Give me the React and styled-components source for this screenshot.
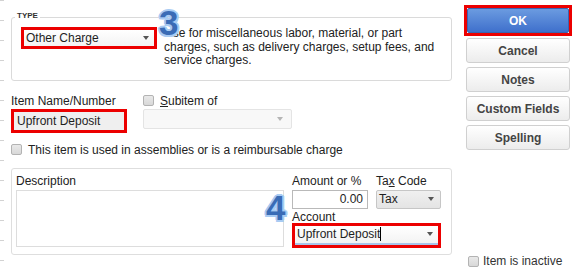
import React from "react";
import styled, { createGlobalStyle } from "styled-components";

const Global = createGlobalStyle`
  html, body { margin: 0; padding: 0; background: #fff; }
  body { font-family: "Liberation Sans", Arial, sans-serif; }
`;

const RED = "#ec0000";

const Page = styled.div`
  position: relative;
  width: 576px;
  height: 268px;
  box-sizing: border-box;
  padding: 5px 4px 0 11px;
  display: flex;
  gap: 12px;
  overflow: hidden;
  font-size: 12px;
  color: #1e1e1e;
  background:
    linear-gradient(#fff 19px, #d2d2d2 19px) 0 1px / 4px 20px repeat-y,
    #fff;
`;

const Main = styled.div`
  width: 441px;
  margin-top: 6px;
  display: flex;
  flex-direction: column;
`;

const TypeBox = styled.fieldset`
  margin: 0;
  min-width: 0;
  padding: 3px 9px 12px 9px;
  border: 1px solid #dadada;
  border-radius: 3px;
`;

const Legend = styled.legend`
  margin-left: -6px;
  padding: 0 2px 4px;
  font-size: 8px;
  line-height: 9px;
  font-weight: bold;
  color: #333;
`;

const TypeRow = styled.div`
  position: relative;
  display: flex;
  align-items: flex-start;
  gap: 7px;
`;

const Highlight = styled.div`
  box-sizing: border-box;
  width: ${(p) => p.$w}px;
  height: ${(p) => p.$h}px;
  border: 3px solid ${RED};
  display: flex;
`;

const SelectFace = styled.div`
  flex: 1;
  display: flex;
  align-items: center;
  justify-content: space-between;
  padding: 0 ${(p) => p.$pr || 6}px 0 ${(p) => p.$pl || 2}px;
  background: ${(p) => p.$bg || "linear-gradient(#ffffff, #f3f3f3)"};
  border-bottom: ${(p) => (p.$focus ? "2px solid #a9c4ea" : "none")};
  white-space: nowrap;
`;

const Arrow = styled.span`
  width: 0;
  height: 0;
  border-left: 3.5px solid transparent;
  border-right: 3.5px solid transparent;
  border-top: 4px solid ${(p) => p.$c || "#555"};
`;

const TypeDesc = styled.div`
  width: 282px;
  line-height: 13.5px;
  color: #222;
`;

const Callout = styled.span`
  position: absolute;
  top: ${(p) => p.$top}px;
  left: ${(p) => p.$left}px;
  font-family: "Liberation Sans", Arial, sans-serif;
  font-size: 35px;
  line-height: 34px;
  font-weight: bold;
  color: #3a6cb6;
  text-shadow:
    2px 0 0 #a8cbf3, -2px 0 0 #a8cbf3, 0 2px 0 #a8cbf3, 0 -2px 0 #a8cbf3,
    1.5px 1.5px 0 #a8cbf3, -1.5px 1.5px 0 #a8cbf3, 1.5px -1.5px 0 #a8cbf3,
    -1.5px -1.5px 0 #a8cbf3;
  pointer-events: none;
`;

const NameRow = styled.div`
  margin-top: 13px;
  display: flex;
  gap: 16px;
`;

const Field = styled.div`
  display: flex;
  flex-direction: column;
  gap: ${(p) => p.$gap || 0}px;
`;

const Label = styled.div`
  line-height: ${(p) => p.$lh || 12}px;
  color: #222;
  white-space: nowrap;
`;

const CheckLabel = styled.label`
  display: flex;
  align-items: center;
  gap: 6px;
  line-height: 14px;
  color: ${(p) => p.$c || "#222"};
  white-space: nowrap;
`;

const Box = styled.span`
  box-sizing: border-box;
  width: 11px;
  height: 11px;
  border: 1px solid #b3b3b3;
  border-radius: 2px;
  background: linear-gradient(#e9e9e9, #d8d8d8);
  flex: none;
`;

const DisabledSelect = styled.div`
  box-sizing: border-box;
  width: 149px;
  height: 20px;
  border: 1px solid #e4e4e4;
  border-radius: 2px;
  background: #f8f8f8;
  display: flex;
  align-items: center;
  justify-content: flex-end;
  padding-right: 8px;
`;

const CheckRow = styled(CheckLabel)`
  margin-top: 10px;
`;

const DetailBox = styled.div`
  position: relative;
  margin-top: 11px;
  box-sizing: border-box;
  height: 87px;
  border: 1px solid #dedede;
  border-radius: 3px;
  padding: 6px 9px 6px 4px;
  display: flex;
  gap: 8px;
`;

const TextArea = styled.div`
  box-sizing: border-box;
  width: 268px;
  height: 57px;
  margin-top: 3px;
  border: 1px solid #dddddd;
  background: #fff;
`;

const PriceGrid = styled.div`
  display: grid;
  grid-template-columns: 76px 65px;
  column-gap: 8px;
  align-content: start;
`;

const TextInput = styled.div`
  box-sizing: border-box;
  height: 19px;
  margin-top: 3px;
  border: 1px solid #b9b9b9;
  background: #fff;
  text-align: right;
  padding-right: 4px;
  line-height: 17px;
`;

const SmallSelect = styled.div`
  box-sizing: border-box;
  height: 19px;
  margin-top: 3px;
  border: 1px solid #c6c6c6;
  border-radius: 2px;
  background: linear-gradient(#f0f0f0, #e4e4e4);
  display: flex;
  align-items: center;
  justify-content: space-between;
  padding: 0 6px 0 2px;
`;

const AccountLabel = styled(Label)`
  grid-column: 1 / 3;
  margin-top: 2px;
`;

const AccountWrap = styled.div`
  grid-column: 1 / 3;
`;

const Caret = styled.span`
  display: inline-block;
  width: 1px;
  height: 14px;
  background: #000;
  vertical-align: -3px;
`;

const Side = styled.div`
  width: 108px;
  height: 263px;
  display: flex;
  flex-direction: column;
  gap: 4px;
`;

const OkFrame = styled.div`
  box-sizing: border-box;
  height: 31px;
  border: 3px solid ${RED};
  margin-bottom: -2px;
  display: flex;
`;

const OkButton = styled.button`
  flex: 1;
  border: 1px solid #3a63b0;
  border-radius: 2px;
  background: linear-gradient(#6b9be0, #3f70cc);
  color: #fff;
  font: bold 12px "Liberation Sans", Arial, sans-serif;
  padding: 0;
`;

const Button = styled.button`
  box-sizing: border-box;
  width: 104px;
  height: 25px;
  margin-left: 2px;
  padding: 0;
  border: 1px solid #d0d0d0;
  border-radius: 3px;
  background: linear-gradient(#ffffff, #ececec);
  color: #444;
  font: bold 12px "Liberation Sans", Arial, sans-serif;
`;

const Inactive = styled(CheckLabel)`
  margin-top: auto;
  padding-left: 4px;
  gap: 4px;
  color: #333;
`;

export default function App() {
  return (
    <>
      <Global />
      <Page>
        <Main>
          <TypeBox>
            <Legend>TYPE</Legend>
            <TypeRow>
              <Highlight $w={138} $h={22}>
                <SelectFace $pr={5}>
                  Other Charge
                  <Arrow />
                </SelectFace>
              </Highlight>
              <TypeDesc>
                Use for miscellaneous labor, material, or part charges, such as
                delivery charges, setup fees, and service charges.
              </TypeDesc>
              <Callout $top={-21} $left={138}>3</Callout>
            </TypeRow>
          </TypeBox>

          <NameRow>
            <Field>
              <Label $lh={14}>Item Name/Number</Label>
              <Highlight $w={116} $h={24} style={{ marginTop: 1 }}>
                <SelectFace $bg="#efefef" $pl={3}>
                  Upfront Deposit
                </SelectFace>
              </Highlight>
            </Field>
            <Field $gap={1}>
              <CheckLabel>
                <Box />
                <span>
                  <u>S</u>ubitem of
                </span>
              </CheckLabel>
              <DisabledSelect>
                <Arrow $c="#b5b5b5" />
              </DisabledSelect>
            </Field>
          </NameRow>

          <CheckRow>
            <Box />
            This item is used in assemblies or is a reimbursable charge
          </CheckRow>

          <DetailBox>
            <Field>
              <Label>Description</Label>
              <TextArea />
            </Field>
            <PriceGrid>
              <Label>Amount or %</Label>
              <Label>
                Ta<u>x</u> Code
              </Label>
              <TextInput>0.00</TextInput>
              <SmallSelect>
                Tax
                <Arrow />
              </SmallSelect>
              <AccountLabel>Account</AccountLabel>
              <AccountWrap>
                <Highlight $w={149} $h={25}>
                  <SelectFace $focus $pl={2} $pr={5}>
                    <span>
                      Upfront Deposit
                      <Caret />
                    </span>
                    <Arrow />
                  </SelectFace>
                </Highlight>
              </AccountWrap>
            </PriceGrid>
            <Callout $top={22} $left={254}>4</Callout>
          </DetailBox>
        </Main>

        <Side>
          <OkFrame>
            <OkButton>OK</OkButton>
          </OkFrame>
          <Button>Cancel</Button>
          <Button>
            No<u>t</u>es
          </Button>
          <Button>Custom Fields</Button>
          <Button>
            Spellin<u>g</u>
          </Button>
          <Inactive>
            <Box />
            Item is inactive
          </Inactive>
        </Side>
      </Page>
    </>
  );
}
